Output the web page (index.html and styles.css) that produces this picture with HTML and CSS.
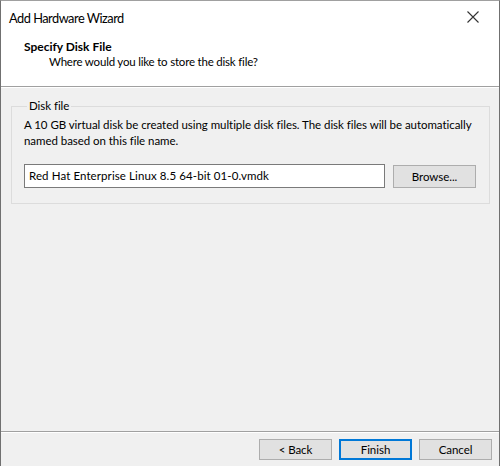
FILE: index.html
```html
<!DOCTYPE html>
<html>
<head>
<meta charset="utf-8">
<link rel="stylesheet" href="styles.css">
</head>
<body>
<div class="window">
  <div class="titlebar">
    <span class="title">Add Hardware Wizard</span>
    <svg class="close" width="12" height="12" viewBox="0 0 12 12"><path d="M0.5 0.5 L11.5 11.5 M11.5 0.5 L0.5 11.5" stroke="#333" stroke-width="1.1" fill="none"/></svg>
  </div>
  <div class="header">
    <div class="h-title">Specify Disk File</div>
    <div class="h-sub">Where would you like to store the disk file?</div>
  </div>
  <div class="content">
    <fieldset class="group">
      <legend>Disk file</legend>
      <p class="desc">A 10 GB virtual disk be created using multiple disk files. The disk files will be automatically named based on this file name.</p>
      <div class="row">
        <div class="input">Red Hat Enterprise Linux 8.5 64-bit 01-0.vmdk</div>
        <div class="btn browse">Browse...</div>
      </div>
    </fieldset>
  </div>
  <div class="footer">
    <div class="btn">&lt; Back</div>
    <div class="btn primary">Finish</div>
    <div class="btn">Cancel</div>
  </div>
</div>
</body>
</html>
```
FILE: styles.css
```css
* { box-sizing: border-box; }
html, body { margin: 0; padding: 0; }
body {
  font-family: Lato, "Noto Sans", sans-serif;
  font-size: 11.5px;
  letter-spacing: -0.05px;
  color: #000;
  background: #f0f0f0;
}
.window {
  width: 500px;
  height: 466px;
  border-left: 1px solid #707070;
  border-right: 1px solid #707070;
  border-top: 1px solid #a0a0a0;
  background: #f0f0f0;
  display: flex;
  flex-direction: column;
}
.titlebar {
  height: 31px;
  background: #fff;
  display: flex;
  align-items: center;
  justify-content: space-between;
  padding: 2px 20px 0 8px;
}
.title {
  font-size: 12.8px;
  letter-spacing: -0.5px;
  color: #000;
}
.close { display: block; margin-top: -2px; }
.header {
  background: #fff;
  height: 55px;
  padding: 7px 0 0 23px;
  border-bottom: 1px solid #a0a0a0;
}
.h-title { font-weight: bold; font-size: 12px; letter-spacing: 0; line-height: 16px; }
.h-sub { padding-left: 25px; line-height: 16px; margin-top: -1px; letter-spacing: -0.2px; }
.content {
  flex: 1;
  border-top: 1px solid #fff;
  padding: 12px 10px 0 10px;
}
.group {
  margin: 0;
  border: 1px solid #dcdcdc;
  padding: 2px 13px 13px 12px;
  height: 104px;
}
.group legend {
  padding: 0 2px;
  margin-left: 3px;
  line-height: 12px;
}
.desc {
  margin: 3px 0 0 0;
  line-height: 16px;
}
.row {
  display: flex;
  gap: 8px;
  margin-top: 15px;
}
.input {
  width: 361px;
  height: 24px;
  background: #fff;
  border: 1px solid #7a7a7a;
  padding: 0 4px;
  line-height: 22px;
  letter-spacing: 0.1px;
}
.btn {
  width: 73px;
  height: 21px;
  background: #e1e1e1;
  border: 1px solid #adadad;
  text-align: center;
  line-height: 19px;
}
.browse { width: 83px; height: 23px; line-height: 21px; margin-top: 1px; }
.primary { border: 1px solid #0078d7; box-shadow: inset 0 0 0 1px #0078d7; }
.footer {
  height: 35px;
  border-top: 1px solid #a0a0a0;
  box-shadow: inset 0 1px 0 #fff;
  display: flex;
  justify-content: flex-end;
  gap: 7px;
  padding: 7px 7px 0 0;
}
```
